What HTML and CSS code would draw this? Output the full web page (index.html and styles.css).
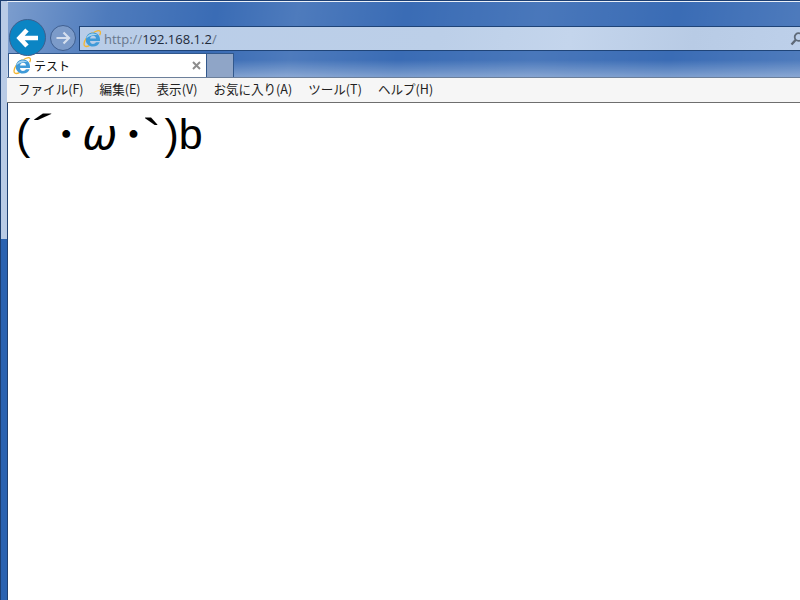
FILE: index.html
```html
<!DOCTYPE html>
<html lang="ja">
<head>
<meta charset="utf-8">
<title>テスト</title>
<link rel="stylesheet" href="styles.css">
</head>
<body>
<svg class="defs" width="0" height="0" aria-hidden="true">
  <symbol id="ie" viewBox="0 0 18 18">
    <path d="M9.500 2.500C5.500 4 1.200 10 1 14c-.1 2.600 2.200 3.200 5.500 1.600" fill="none" stroke="#f2b632" stroke-width="1.300"/>
    <path d="M10.500 2.700C13 .8 16.300 0 17.200 1.500c.5.900.2 2.300-.6 3.700" fill="none" stroke="#f2b632" stroke-width="1.300"/>
    <path d="M17 10.900H7c.1 1.900 1.300 3 3 3 1.300 0 2.300-.6 2.900-1.600h3.800c-1 2.800-3.600 4.300-6.700 4.300-4.200 0-7.200-2.900-7.200-6.800 0-4 3.100-7.200 7.300-7.200 4 0 6.900 3 6.900 6.900v1.400zM7.100 8.500h5.900c-.1-1.700-1.300-2.700-2.900-2.700S7.300 6.800 7.100 8.500z" fill="#3f9ad8" fill-rule="evenodd"/>
    <path d="M3.300 8.500C3.900 5.800 6.500 3.500 10 3.500c2 0 3.500.7 4.600 1.800-3.500-.9-8.600.4-11.300 3.200z" fill="#a5d4f2"/>
  </symbol>
</svg>
<div class="window">
  <header class="chrome">
    <div class="nav">
      <button class="back" type="button" aria-label="戻る">
        <svg width="24" height="22" viewBox="0 0 24 22"><path d="M11 3 3.500 11 11 19M4.500 11H22" fill="none" stroke="#fff" stroke-width="4.600"/></svg>
      </button>
      <button class="forward" type="button" aria-label="進む">
        <svg width="16" height="14" viewBox="0 0 16 14"><path d="M8.500 1.500 14 7 8.500 12.500M13 7H1.500" fill="none" stroke="#d5dfee" stroke-width="2.200"/></svg>
      </button>
      <div class="address">
        <svg class="ie-addr" width="18" height="18"><use href="#ie"/></svg>
        <span class="url"><span class="scheme">http://</span>192.168.1.2<span class="scheme">/</span></span>
        <svg class="search" width="13" height="15" viewBox="0 0 13 15"><circle cx="8.500" cy="6" r="3.800" fill="none" stroke="#5f6a78" stroke-width="1.800"/><path d="M5.800 8.800 1.500 13.500" stroke="#5f6a78" stroke-width="2.400"/></svg>
      </div>
    </div>
    <div class="tabs">
      <div class="tab">
        <svg class="ie-tab" width="18" height="18"><use href="#ie"/></svg>
        <span class="tab-title">テスト</span>
        <svg class="close" width="9" height="9" viewBox="0 0 9 9"><path d="M1 1 8 8M8 1 1 8" stroke="#8d8d8d" stroke-width="2"/></svg>
      </div>
      <div class="new-tab"></div>
    </div>
    <nav class="menu">
      <span>ファイル(F)</span>
      <span>編集(E)</span>
      <span>表示(V)</span>
      <span>お気に入り(A)</span>
      <span>ツール(T)</span>
      <span>ヘルプ(H)</span>
    </nav>
  </header>
  <main class="page">
    <p class="face">(<span class="accent acute">´</span><span class="dot dot-l">･</span><span class="omega">ω</span><span class="dot dot-r">･</span><span class="accent grave">`</span>)b</p>
  </main>
</div>
</body>
</html>
```
FILE: styles.css
```css
html, body {
  margin: 0;
  padding: 0;
  overflow: hidden;
}
.defs { position: absolute; }
.window {
  width: 800px;
  height: 600px;
  box-sizing: border-box;
  display: flex;
  flex-direction: column;
  border-top: 1px solid #1d3f72;
  border-left: 1px solid #1d3f72;
  background:
    linear-gradient(#b9cbe6 0, #b9cbe6 238px, #2a62b0 238px, #2a62b0 100%) left top / 7px 100% no-repeat,
    linear-gradient(100deg, rgba(255,255,255,.35) 0, rgba(255,255,255,.1) 12%, rgba(255,255,255,0) 24%, rgba(255,255,255,.1) 33%, rgba(255,255,255,0) 45%, rgba(255,255,255,.08) 60%, rgba(255,255,255,0) 75%, rgba(255,255,255,.18) 100%),
    #3a6cb5;
  font-family: "Noto Sans CJK JP", "Liberation Sans", sans-serif;
  color: #1a1a1a;
}
.chrome {
  display: flex;
  flex-direction: column;
  margin-left: 6px;
  border-top: 1px solid #eaf0f8;
  background: linear-gradient(rgba(255,255,255,0) 58px, rgba(255,255,255,.32) 74px);
}
.nav {
  display: flex;
  align-items: flex-start;
  height: 51px;
}
.back {
  flex: none;
  width: 37px;
  height: 37px;
  margin: 17px 0 0 2px;
  padding: 0;
  border: 1px solid #3f5f8e;
  border-radius: 50%;
  background: #0b85c4;
  display: flex;
  align-items: center;
  justify-content: center;
  position: relative;
  z-index: 1;
}
.forward {
  flex: none;
  width: 26px;
  height: 26px;
  margin: 23px 0 0 4px;
  padding: 0;
  border: 1px solid #3f5f90;
  border-radius: 50%;
  background: #7c9bc9;
  display: flex;
  align-items: center;
  justify-content: center;
}
.address {
  flex: 1;
  height: 23px;
  margin: 24px 0 0 3px;
  border: 1px solid #1f4478;
  border-right: 0;
  background: linear-gradient(100deg, #b9cde8 0, #bccfe8 50%, #c4d5ec 68%, #b8cbe5 85%, #bdd0ea 100%);
  display: flex;
  align-items: center;
  padding-left: 3px;
  overflow: hidden;
}
.ie-addr { flex: none; }
.url {
  margin-left: 3px;
  font-size: 13px;
  flex: 1;
  color: #1e2a3a;
  font-family: "Open Sans", "Liberation Sans", sans-serif;
}
.scheme { color: #68778c; }
.search { flex: none; margin-right: -3px; }
.tabs {
  display: flex;
  height: 24px;
  margin-left: 1px;
}
.tab {
  width: 199px;
  box-sizing: border-box;
  background: #fff;
  border: 1px solid #32588c;
  border-bottom: 0;
  display: flex;
  align-items: center;
  padding: 0 5px 0 4px;
}
.ie-tab { flex: none; }
.tab-title {
  flex: 1;
  margin-left: 3px;
  font-size: 12px;
  color: #111;
}
.close { flex: none; }
.new-tab {
  width: 27px;
  background: #8fa5c7;
  border: 1px solid #32588c;
  border-left: 0;
  border-bottom: 0;
  box-sizing: border-box;
}
.menu {
  height: 26px;
  box-sizing: border-box;
  padding: 0 0 3px 11px;
  display: flex;
  align-items: center;
  gap: 16px;
  background: #f6f6f6;
  border-top: 1px solid #6c7f9a;
  border-bottom: 1px solid #6e6e6e;
  font-size: 12.55px;
  color: #222;
}
.page {
  flex: 1;
  margin-left: 7px;
  background: #fff;
  box-shadow: -1px 0 0 #1f3f70;
}
.face {
  margin: 7px 0 0 8px;
  font-family: "Liberation Sans", "Noto Sans CJK JP", sans-serif;
  font-size: 43px;
  line-height: 48px;
  color: #000;
}
.accent {
  display: inline-block;
  font-size: 66px;
  line-height: 0;
}
.acute {
  margin: 0 0 0 4px;
  vertical-align: -4px;
  transform: scale(1.25, .65);
}
.grave {
  margin: 0 1px 0 0;
  vertical-align: -11px;
  transform: scale(.9, .75);
}
.dot {
  font-family: "Noto Sans CJK JP", sans-serif;
  font-size: 40px;
  font-weight: 700;
  line-height: 0;
}
.dot-r { margin: 0 -2px 0 0; }
.omega {
  font-family: "DejaVu Sans", sans-serif;
  font-size: 42px;
  font-style: oblique;
  line-height: 0;
  margin: 0 6px;
}
```
